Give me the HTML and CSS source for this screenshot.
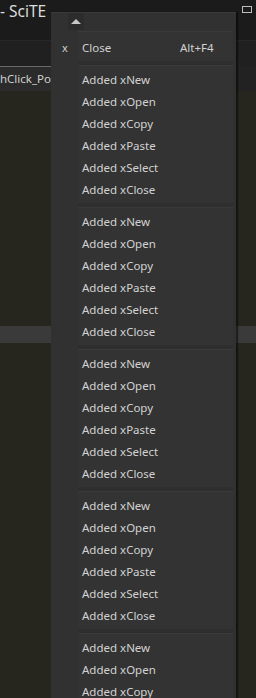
FILE: index.html
```html
<!DOCTYPE html>
<html>
<head>
  <meta charset="utf-8">
  <link rel="stylesheet" href="styles.css">
</head>
<body>
  <div class="window">
    <div class="titlebar">
      <span class="title">- SciTE</span>
      <span class="max-btn"></span>
    </div>
    <div class="toolbar"></div>
    <div class="tabs">
      <div class="tab">hClick_Popup.lua</div>
    </div>
    <div class="editor">
      <div class="current-line"></div>
    </div>
  </div>

  <div class="menu">
    <div class="menu-top">
      <div class="scroll-up"><span class="arrow"></span></div>
    </div>
    <div class="menu-body">
      <div class="group first">
        <div class="item"><span class="check">x</span><span class="label">Close</span><span class="key">Alt+F4</span></div>
      </div>
      <div class="sep"></div>
      <div class="group">
        <div class="item"><span class="label">Added xNew</span></div>
        <div class="item"><span class="label">Added xOpen</span></div>
        <div class="item"><span class="label">Added xCopy</span></div>
        <div class="item"><span class="label">Added xPaste</span></div>
        <div class="item"><span class="label">Added xSelect</span></div>
        <div class="item"><span class="label">Added xClose</span></div>
      </div>
      <div class="sep"></div>
      <div class="group">
        <div class="item"><span class="label">Added xNew</span></div>
        <div class="item"><span class="label">Added xOpen</span></div>
        <div class="item"><span class="label">Added xCopy</span></div>
        <div class="item"><span class="label">Added xPaste</span></div>
        <div class="item"><span class="label">Added xSelect</span></div>
        <div class="item"><span class="label">Added xClose</span></div>
      </div>
      <div class="sep"></div>
      <div class="group">
        <div class="item"><span class="label">Added xNew</span></div>
        <div class="item"><span class="label">Added xOpen</span></div>
        <div class="item"><span class="label">Added xCopy</span></div>
        <div class="item"><span class="label">Added xPaste</span></div>
        <div class="item"><span class="label">Added xSelect</span></div>
        <div class="item"><span class="label">Added xClose</span></div>
      </div>
      <div class="sep"></div>
      <div class="group">
        <div class="item"><span class="label">Added xNew</span></div>
        <div class="item"><span class="label">Added xOpen</span></div>
        <div class="item"><span class="label">Added xCopy</span></div>
        <div class="item"><span class="label">Added xPaste</span></div>
        <div class="item"><span class="label">Added xSelect</span></div>
        <div class="item"><span class="label">Added xClose</span></div>
      </div>
      <div class="sep"></div>
      <div class="group">
        <div class="item"><span class="label">Added xNew</span></div>
        <div class="item"><span class="label">Added xOpen</span></div>
        <div class="item"><span class="label">Added xCopy</span></div>
        <div class="item"><span class="label">Added xPaste</span></div>
        <div class="item"><span class="label">Added xSelect</span></div>
        <div class="item"><span class="label">Added xClose</span></div>
      </div>
    </div>
  </div>
</body>
</html>
```

FILE: styles.css
```css
* {
  margin: 0;
  padding: 0;
  box-sizing: border-box;
}

body {
  width: 256px;
  height: 698px;
  overflow: hidden;
  background: #26261f;
  font-family: "Noto Sans", "Open Sans", sans-serif;
  position: relative;
}

.window {
  display: flex;
  flex-direction: column;
  height: 100%;
}

.titlebar {
  height: 41px;
  background: #1b1b1b;
  display: flex;
  justify-content: space-between;
  align-items: flex-start;
  border-bottom: 1px solid #262626;
}

.title {
  font-size: 15.5px;
  color: #dcdcdc;
  line-height: 22px;
}

.max-btn {
  width: 10px;
  height: 7px;
  border: 1px solid #bdbdbd;
  margin: 6px 4px 0 0;
}

.toolbar {
  height: 25px;
  background: #202020;
}

.tabs {
  height: 25px;
  background: #222222;
  display: flex;
}

.tab {
  background: #2b2b2b;
  border-top: 1px solid #6a6a6a;
  color: #cfcfcf;
  font-size: 11.5px;
  line-height: 23px;
  width: 51px;
  white-space: nowrap;
  overflow: hidden;
}

.editor {
  flex: 1;
  background: #26261f;
  padding-top: 235px;
}

.current-line {
  height: 17px;
  background: #3a3a3a;
}

.menu {
  position: absolute;
  left: 51px;
  top: 12px;
  width: 185px;
  height: 700px;
  background: #313131;
  border-top: 1px solid #3a3a3a;
  box-shadow: 2px 0 1px rgba(0, 0, 0, 0.45);
}

.menu-top {
  height: 18px;
  padding-left: 17px;
}

.scroll-up {
  width: 16px;
  height: 17px;
  background: #2c2c2c;
  display: flex;
  align-items: center;
  justify-content: center;
}

.arrow {
  width: 0;
  height: 0;
  border-left: 5px solid transparent;
  border-right: 5px solid transparent;
  border-bottom: 5px solid #c8c8c8;
}

.menu-body {
  padding-right: 3px;
}

.group {
  background: #333333;
  margin-left: 27px;
}

.group.first {
  border-top: 1px solid #3a3a3a;
  padding-top: 4px;
}

.sep {
  height: 10px;
  margin-left: 27px;
  background: #2e2e2e;
  border-top: 3px solid #333333;
  border-bottom: 2px solid #333333;
  position: relative;
}

.sep::after {
  content: '';
  position: absolute;
  left: 0;
  right: 0;
  bottom: 0;
  height: 1px;
  background: #3a3a3a;
}

.item {
  height: 22px;
  display: flex;
  align-items: center;
  font-size: 11.5px;
  color: #d2d2d2;
  position: relative;
}

.label {
  padding-left: 4px;
  flex: 1;
}

.key {
  width: 53px;
}

.check {
  position: absolute;
  left: -16px;
  font-size: 11px;
  color: #d0d0d0;
}
```
